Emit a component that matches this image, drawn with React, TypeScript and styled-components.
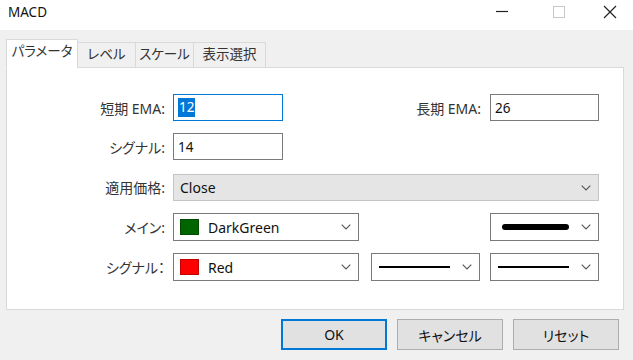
import React from "react";
import styled, { createGlobalStyle, css } from "styled-components";

const GlobalStyle = createGlobalStyle`
  html, body { margin: 0; padding: 0; background: #f0f0f0; }
  body {
    font-family: "Noto Sans", "Noto Sans CJK JP", sans-serif;
    font-feature-settings: "palt";
    color: #1a1a1a;
  }
  * { box-sizing: border-box; }
`;

const Window = styled.div`
  width: 633px;
  height: 360px;
  display: flex;
  flex-direction: column;
  overflow: hidden;
`;

const TitleBar = styled.div`
  height: 30px;
  background: #ffffff;
  display: flex;
  align-items: center;
  flex-shrink: 0;
`;

const Title = styled.div`
  flex: 1;
  padding-left: 8px;
  font-size: 13.5px;
  color: #111;
  margin-top: -6px;
`;

const Controls = styled.div`
  display: flex;
  height: 100%;
`;

const ControlButton = styled.div<{ $w?: number }>`
  width: ${(p) => p.$w ?? 57}px;
  height: 100%;
  display: flex;
  align-items: flex-start;
  justify-content: center;
  padding-top: 5px;
`;

const Body = styled.div`
  flex: 1;
  background: #f0f0f0;
  padding: 10px 9px 0 6px;
  display: flex;
  flex-direction: column;
`;

const TabBar = styled.div`
  display: flex;
  align-items: flex-end;
  height: 28px;
  position: relative;
  z-index: 1;
  margin-bottom: -1px;
`;

const Tab = styled.div<{ $active?: boolean; $w: number }>`
  width: ${(p) => p.$w}px;
  font-size: 13.5px;
  line-height: 1;
  display: flex;
  align-items: center;
  justify-content: center;
  border: 1px solid #d9d9d9;
  margin-left: -1px;
  color: #333;
  ${(p) =>
    p.$active
      ? css`
          height: 29px;
          background: #ffffff;
          border-bottom-color: #ffffff;
          margin-left: 0;
          padding-bottom: 3px;
        `
      : css`
          height: 26px;
          background: #f0f0f0;
          padding-bottom: 1px;
        `}
`;

const Panel = styled.div`
  width: 618px;
  height: 243px;
  background: #ffffff;
  border: 1px solid #d9d9d9;
  padding-top: 26px;
`;

const Form = styled.div`
  display: grid;
  grid-template-columns: 158px 426px;
  column-gap: 8px;
  row-gap: 12px;
  align-items: center;
`;

const Label = styled.div`
  font-size: 14px;
  text-align: right;
  color: #333;
  white-space: nowrap;
`;

const Fields = styled.div<{ $h: number; $mt?: number }>`
  display: flex;
  align-items: center;
  height: ${(p) => p.$h}px;
  margin-top: ${(p) => p.$mt ?? 0}px;
`;

const Spacer = styled.div`
  flex: 1;
`;

const InlineLabel = styled(Label)`
  margin-right: 9px;
`;

const TextInput = styled.div<{ $focused?: boolean; $w: number }>`
  width: ${(p) => p.$w}px;
  height: 100%;
  border: 1px solid ${(p) => (p.$focused ? "#0078d7" : "#7a7a7a")};
  background: #fff;
  display: flex;
  align-items: center;
  padding-left: 4px;
  font-size: 13.5px;
  color: #111;
`;

const Selected = styled.span`
  background: #0078d7;
  color: #fff;
  padding: 0 1px;
  line-height: 19px;
`;

const SelectBox = styled.div<{ $w?: number; $disabled?: boolean; $gap?: number }>`
  ${(p) => (p.$w ? `width: ${p.$w}px;` : "flex: 1;")}
  height: 100%;
  margin-left: ${(p) => p.$gap ?? 0}px;
  border: 1px solid ${(p) => (p.$disabled ? "#c4c4c4" : "#7a7a7a")};
  background: ${(p) => (p.$disabled ? "#e5e5e5" : "#ffffff")};
  display: flex;
  align-items: center;
  padding: 0 7px 0 6px;
  font-size: 14px;
  color: #111;
`;

const SelectContent = styled.div`
  flex: 1;
  display: flex;
  align-items: center;
  gap: 9px;
  min-width: 0;
`;

const Swatch = styled.span<{ $color: string }>`
  width: 19px;
  height: 16px;
  background: ${(p) => p.$color};
  border: 1px solid rgba(0, 0, 0, 0.25);
  flex-shrink: 0;
`;

const LineSample = styled.span<{ $thick?: boolean }>`
  display: block;
  width: ${(p) => (p.$thick ? 67 : 71)}px;
  height: ${(p) => (p.$thick ? 6 : 1.5)}px;
  background: #000;
  border-radius: ${(p) => (p.$thick ? 3 : 0)}px;
  margin-left: ${(p) => (p.$thick ? 5 : 1)}px;
`;

const ButtonRow = styled.div`
  display: flex;
  justify-content: flex-end;
  gap: 10px;
  padding-top: 9px;
  margin-right: 5px;
`;

const Button = styled.div<{ $default?: boolean }>`
  width: 106px;
  height: 31px;
  background: #e1e1e1;
  border: ${(p) => (p.$default ? "2px solid #0078d7" : "1px solid #adadad")};
  display: flex;
  align-items: center;
  justify-content: center;
  font-size: 14px;
  color: #111;
`;

const Chevron = () => (
  <svg width="10" height="6" viewBox="0 0 10 6" style={{ flexShrink: 0 }}>
    <polyline points="0.7,0.7 5,5 9.3,0.7" fill="none" stroke="#555" strokeWidth="1.1" />
  </svg>
);

const Select: React.FC<{
  w?: number;
  gap?: number;
  disabled?: boolean;
  children?: React.ReactNode;
}> = ({ w, gap, disabled, children }) => (
  <SelectBox $w={w} $gap={gap} $disabled={disabled}>
    <SelectContent>{children}</SelectContent>
    <Chevron />
  </SelectBox>
);

export default function App() {
  return (
    <>
      <GlobalStyle />
      <Window>
        <TitleBar>
          <Title>MACD</Title>
          <Controls>
            <ControlButton>
              <svg width="14" height="14" viewBox="0 0 14 14">
                <line x1="1" y1="6.5" x2="13" y2="6.5" stroke="#222" strokeWidth="1.2" />
              </svg>
            </ControlButton>
            <ControlButton>
              <svg width="14" height="14" viewBox="0 0 14 14">
                <rect x="1.5" y="1.5" width="11" height="11" fill="none" stroke="#c8c8c8" strokeWidth="1" />
              </svg>
            </ControlButton>
            <ControlButton $w={46}>
              <svg width="14" height="14" viewBox="0 0 14 14">
                <path d="M1 1 L13 13 M13 1 L1 13" stroke="#222" strokeWidth="1.2" />
              </svg>
            </ControlButton>
          </Controls>
        </TitleBar>
        <Body>
          <TabBar>
            <Tab $active $w={72}>パラメータ</Tab>
            <Tab $w={59}>レベル</Tab>
            <Tab $w={59}>スケール</Tab>
            <Tab $w={73}>表示選択</Tab>
          </TabBar>
          <Panel>
            <Form>
              <Label>短期 EMA:</Label>
              <Fields $h={27}>
                <TextInput $w={110} $focused>
                  <Selected>12</Selected>
                </TextInput>
                <Spacer />
                <InlineLabel>長期 EMA:</InlineLabel>
                <TextInput $w={109}>26</TextInput>
              </Fields>

              <Label>シグナル:</Label>
              <Fields $h={27}>
                <TextInput $w={110}>14</TextInput>
              </Fields>

              <Label>適用価格:</Label>
              <Fields $h={27} $mt={2}>
                <Select disabled>Close</Select>
              </Fields>

              <Label>メイン:</Label>
              <Fields $h={28}>
                <Select w={186}>
                  <Swatch $color="#006400" />
                  DarkGreen
                </Select>
                <Spacer />
                <Select w={109}>
                  <LineSample $thick />
                </Select>
              </Fields>

              <Label>シグナル：</Label>
              <Fields $h={28}>
                <Select w={186}>
                  <Swatch $color="#ff0000" />
                  Red
                </Select>
                <Select w={109} gap={12}>
                  <LineSample />
                </Select>
                <Select w={109} gap={10}>
                  <LineSample />
                </Select>
              </Fields>
            </Form>
          </Panel>
          <ButtonRow>
            <Button $default>OK</Button>
            <Button>キャンセル</Button>
            <Button>リセット</Button>
          </ButtonRow>
        </Body>
      </Window>
    </>
  );
}
